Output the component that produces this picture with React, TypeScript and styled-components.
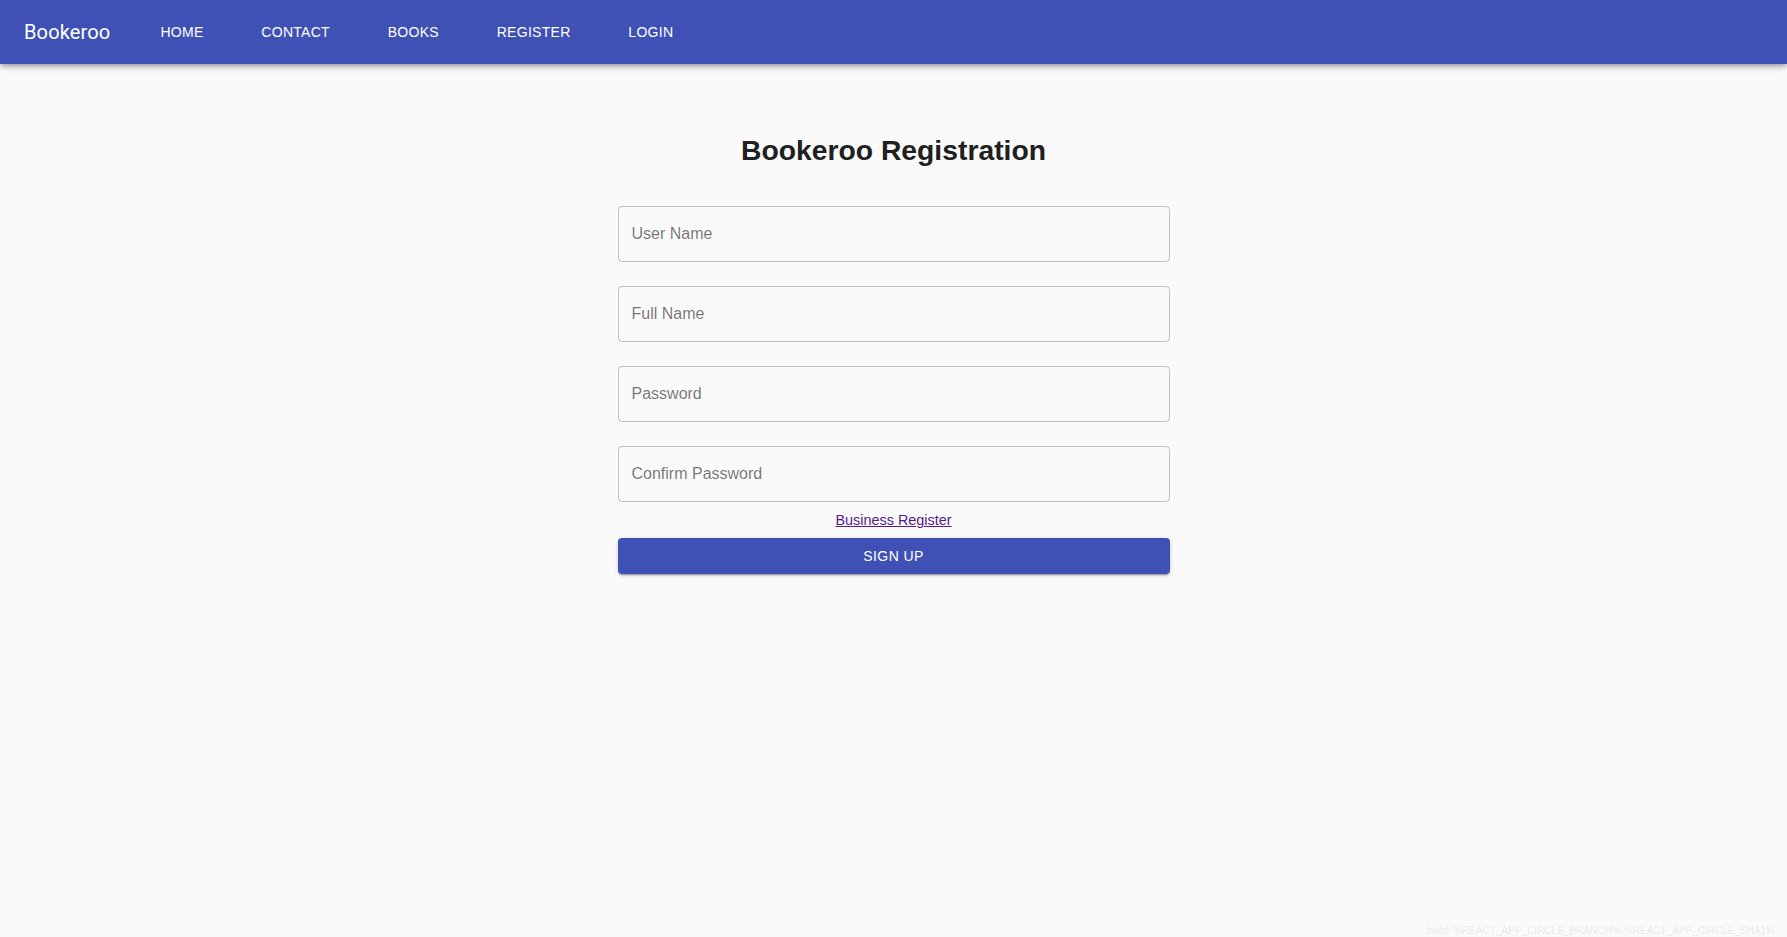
import React from "react";
import styled, { createGlobalStyle } from "styled-components";

const GlobalStyle = createGlobalStyle`
  html, body {
    margin: 0;
    padding: 0;
    background: #fafafa;
    font-family: "Liberation Sans", Arial, Helvetica, sans-serif;
  }
  * { box-sizing: border-box; }
`;

const Page = styled.div`
  min-height: 937px;
  display: flex;
  flex-direction: column;
`;

const AppBar = styled.header`
  height: 64px;
  background: #3f51b5;
  color: #fff;
  display: flex;
  align-items: center;
  padding: 0 24px;
  box-shadow: 0px 2px 4px -1px rgba(0, 0, 0, 0.2),
    0px 4px 5px 0px rgba(0, 0, 0, 0.14), 0px 1px 10px 0px rgba(0, 0, 0, 0.12);
  position: relative;
  z-index: 1;
`;

const Logo = styled.div`
  font-family: Roboto, "Liberation Sans", Arial, sans-serif;
  font-size: 20px;
  font-weight: 400;
  letter-spacing: 0.15px;
  line-height: 1.6;
`;

const NavList = styled.nav`
  display: flex;
  align-items: center;
  gap: 57.8px;
  margin-left: 50px;
`;

const NavLink = styled.a`
  color: #fff;
  text-decoration: none;
  font-size: 14px;
  text-transform: uppercase;
  letter-spacing: 0.28px;
  line-height: 1.75;
  cursor: pointer;
`;

const Main = styled.main`
  display: flex;
  flex-direction: column;
  align-items: center;
`;

const Title = styled.h1`
  margin: 70px 0 40px;
  font-size: 28.3px;
  line-height: 32px;
  font-weight: 700;
  color: #202020;
`;

const Form = styled.form`
  width: 552px;
  display: flex;
  flex-direction: column;
  gap: 24px;
`;

const Field = styled.input`
  height: 56px;
  width: 100%;
  border: 1px solid rgba(0, 0, 0, 0.23);
  border-radius: 4px;
  background: transparent;
  padding: 0 14px 0 13px;
  font-family: "Liberation Sans", Arial, sans-serif;
  font-size: 16px;
  color: rgba(0, 0, 0, 0.87);
  outline: none;
  &::placeholder {
    color: rgba(0, 0, 0, 0.54);
  }
`;

const LinkRow = styled.div`
  margin-top: 10px;
  text-align: center;
  line-height: 16px;
`;

const BusinessLink = styled.a`
  font-size: 14.4px;
  color: #551a8b;
  text-decoration: underline;
  cursor: pointer;
`;

const SubmitButton = styled.button`
  margin-top: 10px;
  width: 552px;
  height: 36px;
  border: none;
  border-radius: 4px;
  background: #3f51b5;
  color: #fff;
  font-family: "Liberation Sans", Arial, sans-serif;
  font-size: 14px;
  letter-spacing: 0.4px;
  text-transform: uppercase;
  cursor: pointer;
  box-shadow: 0px 3px 1px -2px rgba(0, 0, 0, 0.2),
    0px 2px 2px 0px rgba(0, 0, 0, 0.14), 0px 1px 5px 0px rgba(0, 0, 0, 0.12);
`;

const BuildInfo = styled.div`
  position: fixed;
  right: 12px;
  bottom: 1px;
  font-size: 10px;
  color: rgba(0, 0, 0, 0.08);
`;

const navItems = ["Home", "Contact", "Books", "Register", "Login"];
const fields = ["User Name", "Full Name", "Password", "Confirm Password"];

export default function App() {
  return (
    <>
      <GlobalStyle />
      <Page>
        <AppBar>
          <Logo>Bookeroo</Logo>
          <NavList>
            {navItems.map((n) => (
              <NavLink key={n}>{n}</NavLink>
            ))}
          </NavList>
        </AppBar>
        <Main>
          <Title>Bookeroo Registration</Title>
          <Form onSubmit={(e) => e.preventDefault()}>
            {fields.map((f) => (
              <Field
                key={f}
                placeholder={f}
                type={f.includes("Password") ? "password" : "text"}
              />
            ))}
          </Form>
          <LinkRow>
            <BusinessLink>Business Register</BusinessLink>
          </LinkRow>
          <SubmitButton type="button">Sign Up</SubmitButton>
        </Main>
        <BuildInfo>build: %REACT_APP_CIRCLE_BRANCH%-%REACT_APP_CIRCLE_SHA1%</BuildInfo>
      </Page>
    </>
  );
}
